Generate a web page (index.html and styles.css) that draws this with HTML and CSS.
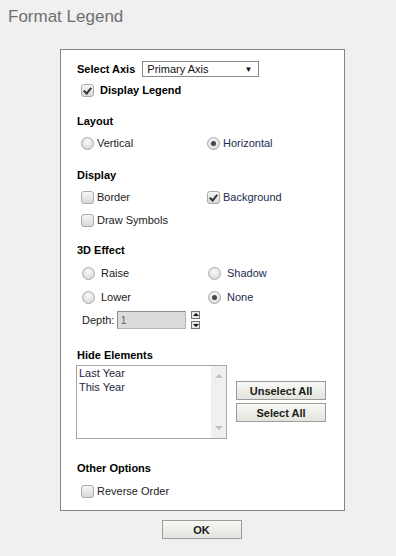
FILE: index.html
```html
<!DOCTYPE html>
<html lang="en">
<head>
    <meta charset="UTF-8">
    <title>Format Legend</title>
    <link rel="stylesheet" href="styles.css">
</head>
<body>
    <div class="title">Format Legend</div>

    <div class="dialog">
        <div class="panel">
            <div class="axis-row">
                <span class="label">Select Axis</span>
                <div class="select">
                    <span>Primary Axis</span>
                    <span class="select-arrow">&#9660;</span>
                </div>
            </div>

            <div class="opt legend-opt">
                <span class="check on"></span>
                <span class="label">Display Legend</span>
            </div>

            <div class="section-title layout-title">Layout</div>
            <div class="pair first-pair">
                <div class="opt"><span class="radio"></span><span>Vertical</span></div>
                <div class="opt alt"><span class="radio on"></span><span>Horizontal</span></div>
            </div>

            <div class="section-title">Display</div>
            <div class="pair first-pair">
                <div class="opt"><span class="check"></span><span>Border</span></div>
                <div class="opt alt"><span class="check on"></span><span>Background</span></div>
            </div>
            <div class="pair">
                <div class="opt"><span class="check"></span><span>Draw Symbols</span></div>
            </div>

            <div class="section-title effect-title">3D Effect</div>
            <div class="pair first-pair">
                <div class="opt wide"><span class="radio"></span><span>Raise</span></div>
                <div class="opt wide"><span class="radio"></span><span>Shadow</span></div>
            </div>
            <div class="pair">
                <div class="opt wide"><span class="radio"></span><span>Lower</span></div>
                <div class="opt wide"><span class="radio on"></span><span>None</span></div>
            </div>
            <div class="depth-row">
                <span>Depth:</span>
                <div class="depth-input">1</div>
                <div class="spinner">
                    <span class="spin up"></span>
                    <span class="spin down"></span>
                </div>
            </div>

            <div class="section-title hide-title">Hide Elements</div>
            <div class="hide-row">
                <div class="listbox">
                    <div class="items">
                        <div>Last Year</div>
                        <div>This Year</div>
                    </div>
                    <div class="scroll">
                        <span class="scroll-up"></span>
                        <span class="scroll-down"></span>
                    </div>
                </div>
                <div class="buttons">
                    <button class="btn">Unselect All</button>
                    <button class="btn">Select All</button>
                </div>
            </div>

            <div class="section-title other-title">Other Options</div>
            <div class="pair first-pair">
                <div class="opt"><span class="check"></span><span>Reverse Order</span></div>
            </div>
        </div>

        <div class="footer">
            <button class="btn ok">OK</button>
        </div>
    </div>
</body>
</html>
```

FILE: styles.css
```css
* {
    margin: 0;
    padding: 0;
    box-sizing: border-box;
}

body {
    font-family: "Liberation Sans", Arial, sans-serif;
    font-size: 11px;
    color: #1b1b1b;
    background: #f0f0f0;
    width: 396px;
    height: 556px;
    overflow: hidden;
}

.title {
    font-size: 17px;
    line-height: 20px;
    color: #6f6f6f;
    padding: 7px 0 0 8px;
}

.dialog {
    width: 285px;
    margin: 22px 0 0 60px;
}

.panel {
    background: #fff;
    border: 1px solid #858585;
    padding: 11px 16px 11px 16px;
}

.label {
    font-weight: bold;
    color: #000;
}

/* Select Axis */
.axis-row {
    display: flex;
    align-items: center;
    height: 16px;
}

.select {
    display: flex;
    align-items: center;
    justify-content: space-between;
    width: 117px;
    height: 16px;
    margin-left: 7px;
    padding: 0 6px 0 4px;
    border: 1px solid #8a8a8a;
    background: #fff;
    color: #111;
}

.select-arrow {
    font-size: 8px;
    color: #111;
}

/* options */
.opt {
    display: flex;
    align-items: center;
    height: 16px;
    padding-left: 4px;
    gap: 3px;
}

.opt.wide {
    padding-left: 5px;
    gap: 6px;
}

.opt.alt span:last-child,
.pair .opt.wide + .opt.wide span:last-child {
    color: #1a2c50;
}

.legend-opt {
    margin-top: 5px;
    gap: 6px;
}

.check,
.radio {
    flex: none;
    width: 13px;
    height: 13px;
    border: 1px solid #a9a9a9;
    background: linear-gradient(#f6f6f6, #d9d9d9);
    position: relative;
}

.check {
    border-radius: 3px;
}

.check.on::after {
    content: "";
    position: absolute;
    left: 3px;
    top: 1px;
    width: 3px;
    height: 6px;
    border-right: 2px solid #333;
    border-bottom: 2px solid #333;
    transform: rotate(40deg);
}

.radio {
    border-radius: 50%;
    background: radial-gradient(circle at 50% 35%, #fafafa, #d2d2d2);
}

.radio.on::after {
    content: "";
    position: absolute;
    left: 3px;
    top: 3px;
    width: 5px;
    height: 5px;
    border-radius: 50%;
    background: #454545;
}

.pair {
    display: grid;
    grid-template-columns: 126px 1fr;
    margin-top: 7px;
}

.section-title {
    font-weight: bold;
    color: #000;
    line-height: 14px;
    margin-top: 17px;
}

.layout-title {
    margin-top: 16px;
}

.effect-title {
    margin-top: 15px;
}

.effect-title + .first-pair,
.effect-title + .first-pair + .pair {
    margin-top: 8px;
}

/* depth */
.depth-row {
    display: flex;
    align-items: center;
    margin-top: 6px;
    padding-left: 5px;
    height: 18px;
}

.depth-input {
    width: 69px;
    height: 18px;
    margin-left: 3px;
    padding-left: 2px;
    line-height: 16px;
    background: #dcdcdc;
    border: 1px solid #b5b5b5;
    border-top-color: #8c8c8c;
    border-left-color: #8c8c8c;
    color: #666;
}

.spinner {
    display: flex;
    flex-direction: column;
    gap: 2px;
    margin-left: 5px;
}

.spin {
    width: 9px;
    height: 8px;
    border: 1px solid #777;
    background: #e8e8e8;
    position: relative;
}

.spin::after {
    content: "";
    position: absolute;
    left: 1px;
    border-left: 3px solid transparent;
    border-right: 3px solid transparent;
}

.spin.up::after {
    top: 1px;
    border-bottom: 3px solid #111;
}

.spin.down::after {
    top: 2px;
    border-top: 3px solid #111;
}

/* hide elements */
.hide-title {
    margin-top: 19px;
}

.hide-row {
    display: flex;
    margin: 3px 0 0 -1px;
}

.listbox {
    display: flex;
    width: 151px;
    height: 74px;
    border: 1px solid #a6a6a6;
    background: #fff;
}

.items {
    flex: 1;
    padding: 0 0 0 2px;
    line-height: 14px;
    color: #1e1e3c;
}

.scroll {
    width: 15px;
    background: #f0f0f0;
    position: relative;
}

.scroll-up,
.scroll-down {
    position: absolute;
    left: 4px;
    border-left: 4px solid transparent;
    border-right: 4px solid transparent;
}

.scroll-up {
    top: 8px;
    border-bottom: 4px solid #c2c2c2;
}

.scroll-down {
    bottom: 8px;
    border-top: 4px solid #c2c2c2;
}

.buttons {
    display: flex;
    flex-direction: column;
    gap: 3px;
    padding-top: 16px;
    margin-left: 9px;
}

.btn {
    font-family: "Liberation Sans", Arial, sans-serif;
    font-size: 11px;
    font-weight: bold;
    color: #1a1a1a;
    width: 90px;
    height: 19px;
    border: 1px solid #9c9c9c;
    background: linear-gradient(#f8f8f4, #e4e4de);
}

.other-title {
    margin-top: 22px;
}

.other-title + .pair {
    margin-top: 8px;
}

.footer {
    display: flex;
    justify-content: center;
    margin-top: 9px;
}

.btn.ok {
    width: 80px;
    margin-left: -2px;
}
```
